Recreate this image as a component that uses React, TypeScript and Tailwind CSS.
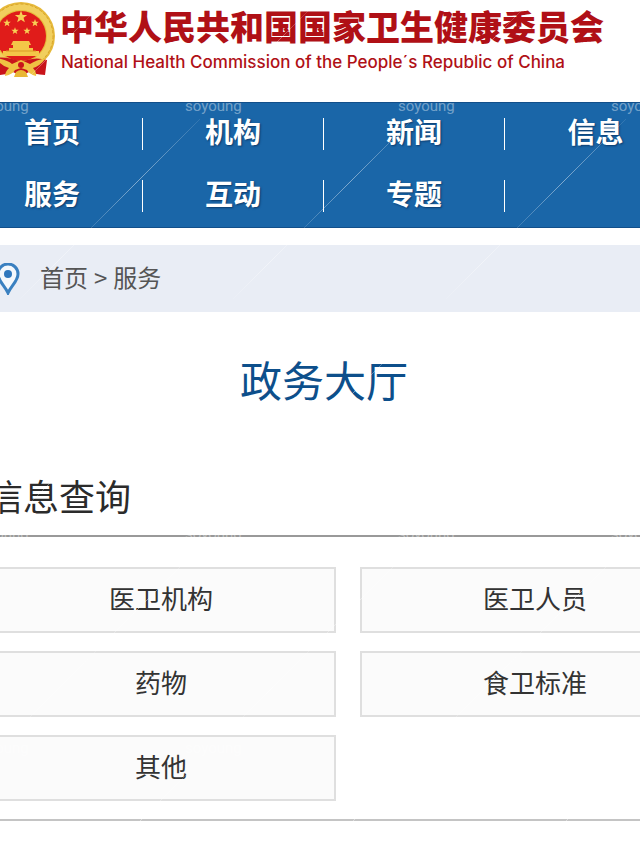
import React from "react";

const navItems = ["首页", "机构", "新闻", "信息", "服务", "互动", "专题", ""];

const services = ["医卫机构", "医卫人员", "药物", "食卫标准", "其他"];

const columns = [-28, 185, 398, 611];
const rows = [-102, 111, 325, 539, 753];

const Star = ({ x, y, size }: { x: number; y: number; size: number }) => (
  <path
    transform={`translate(${x} ${y}) scale(${size})`}
    fill="#f8cf55"
    d="M0 -10L2.5 -3.2L9.5 -3.1L3.9 1.3L5.9 8.1L0 4.1L-5.9 8.1L-3.9 1.3L-9.5 -3.1L-2.5 -3.2Z"
  />
);

const Emblem = () => (
  <svg viewBox="0 0 70 76" className="h-[76px] w-[70px] shrink-0" aria-hidden="true">
    <circle cx="35" cy="34" r="34" fill="#e6b93a" />
    <circle cx="35" cy="34" r="29" fill="none" stroke="#f1cf5e" strokeWidth="6" />
    <circle cx="35" cy="34" r="32" fill="none" stroke="#d9a52c" strokeWidth="1" strokeDasharray="3 2" />
    <circle cx="35" cy="34" r="25" fill="#e01c1a" />
    <Star x={35} y={15} size={0.65} />
    <Star x={21} y={21} size={0.4} />
    <Star x={29} y={29} size={0.38} />
    <Star x={41} y={29} size={0.38} />
    <Star x={49} y={21} size={0.4} />
    <path d="M27 39h16l2 4H25zM27 43h16v4H27zM23 46h24v3H23zM17 49h36v5H17z" fill="#f4c648" />
    <path d="M20 49h30" stroke="#d99a24" strokeWidth="1" />
    <path d="M8 56Q22 54 35 60Q48 54 61 58L59 73Q48 72 43 70L35 74L27 70Q20 73 11 73Z" fill="#c9141b" />
    <path
      d="M10 56Q21 58 26 62L35 58L44 62Q50 58 60 56Q54 64 47 66Q51 70 50 74Q43 72 41 68L35 66L29 68Q27 72 19 74Q19 70 23 66Q15 64 10 56Z"
      fill="#efc143"
    />
    <path d="M30 70Q35 66 40 70L42 75H28Z" fill="#e9b735" />
    <circle cx="35" cy="63" r="3" fill="#c9141b" />
  </svg>
);

const Watermark = () => (
  <svg className="pointer-events-none absolute inset-0 h-full w-full" aria-hidden="true">
    <defs>
      <linearGradient id="streak" x1="1" y1="0" x2="0" y2="1">
        <stop offset="0" stopColor="#fff" stopOpacity="0.1" />
        <stop offset="0.35" stopColor="#fff" stopOpacity="0.45" />
        <stop offset="0.6" stopColor="#fff" stopOpacity="0.15" />
        <stop offset="0.8" stopColor="#fff" stopOpacity="0.4" />
        <stop offset="1" stopColor="#fff" stopOpacity="0.1" />
      </linearGradient>
    </defs>
    {rows.map((y) =>
      columns.map((x) => (
        <g key={`${x}-${y}`}>
          <text x={x} y={y} fill="#fff" fillOpacity="0.4" fontSize="15" fontFamily="Roboto, sans-serif">
            soyoung
          </text>
          <path d={`M${x + 15} ${y + 8}l-180 180`} stroke="url(#streak)" />
        </g>
      ))
    )}
  </svg>
);

const App = () => {
  return (
    <div className="relative overflow-hidden bg-white pb-8 font-['Noto_Sans_CJK_SC',sans-serif]">
      <header className="-ml-[14px] flex h-[102px] items-start gap-1 whitespace-nowrap pt-[2px] text-[#b01016]">
        <Emblem />
        <div>
          <h1 className="text-[34px] font-black leading-[48px]">
            中华人民共和国国家卫生健康委员会
          </h1>
          <p className="pl-[1px] pt-[2px] font-['Inter',sans-serif] text-[17px] font-medium leading-5">
            National Health Commission of the People´s Republic of China
          </p>
        </div>
      </header>

      <nav className="border-y border-[#124f8a] bg-[#1a66a8]">
        <ul className="-ml-[38px] -mr-[46px] grid grid-cols-4">
          {navItems.map((item, i) => (
            <li key={i} className="flex h-[62px] items-center">
              {item && (
                <a href="#" className="flex-1 pb-[6px] text-center text-[28px] font-bold leading-8 text-white [text-shadow:1px_1px_2px_#0c3a6b]">
                  {item}
                </a>
              )}
              {item && i !== 3 && <span className="h-8 w-px bg-white" />}
            </li>
          ))}
        </ul>
      </nav>

      <div className="mt-[17px] flex h-[67px] items-center bg-[#e9edf5] text-[24px] text-[#555]">
        <svg viewBox="0 0 24 32" className="-ml-1 mr-5 h-8 w-6" aria-hidden="true">
          <path d="M12 30C9 23 2 18 2 11a10 10 0 0 1 20 0C22 18 15 23 12 30Z" fill="#f4f8fc" stroke="#3a80c0" strokeWidth="3" />
          <circle cx="12" cy="11" r="4" fill="#2f78bd" />
        </svg>
        <div className="flex pb-1">
          <a href="#">首页</a>
          <span className="mx-[6px]">&gt;</span>
          <a href="#">服务</a>
        </div>
      </div>

      <main>
        <h2 className="-ml-[38px] -mr-[46px] pt-[35px] text-center text-[42px] leading-[64px] text-[#0d4f8b]">
          政务大厅
        </h2>
        <h3 className="-ml-[13px] mt-[58px] border-b-2 border-[#999] pb-[14px] text-[36px] leading-[52px] text-[#2b2b2b]">
          信息查询
        </h3>
        <div className="border-b-2 border-[#c4c4c4] pb-[18px] pt-[30px]">
          <div className="-ml-[14px] -mr-[70px] grid grid-cols-2 gap-x-6 gap-y-[18px]">
            {services.map((name) => (
              <a
                key={name}
                href="#"
                className="flex h-[66px] items-center justify-center border-2 border-[#dfdfdf] bg-[#fbfbfb] pb-[6px] text-[26px] text-[#333]"
              >
                {name}
              </a>
            ))}
          </div>
        </div>
      </main>

      <Watermark />
    </div>
  );
};

export default App;
